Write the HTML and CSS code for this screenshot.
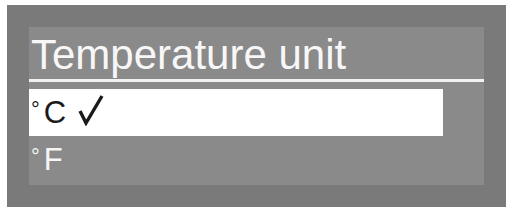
FILE: index.html
```html
<!DOCTYPE html>
<html lang="en">
<head>
    <meta charset="UTF-8">
    <title>Temperature unit</title>
    <link rel="stylesheet" href="styles.css">
</head>
<body>
    <div class="frame">
        <div class="panel">
            <div class="title">Temperature unit</div>
            <div class="rule"></div>
            <div class="option selected">
                <span class="unit"><span class="deg">°</span>C</span>
                <svg class="check" width="26" height="32" viewBox="0 0 26 32">
                    <path d="M2 17 L8 29 L24 2" fill="none" stroke="#1a1a1a" stroke-width="3.4" stroke-linejoin="miter"/>
                </svg>
            </div>
            <div class="option">
                <span class="unit"><span class="deg">°</span>F</span>
            </div>
        </div>
    </div>
</body>
</html>
```

FILE: styles.css
```css
body {
    margin: 0;
    background: #ffffff;
    font-family: "Liberation Sans", Arial, sans-serif;
}
.frame {
    margin: 5px 0 0 7px;
    width: 499px;
    height: 202px;
    box-sizing: border-box;
    padding: 22px;
    background: #7a7a7a;
}
.panel {
    height: 158px;
    background: #8a8a8a;
    display: flex;
    flex-direction: column;
}
.title {
    height: 52px;
    line-height: 56px;
    font-size: 42px;
    color: #f7f7f7;
    padding-left: 2px;
    white-space: nowrap;
}
.rule {
    height: 3px;
    background: #f2f2f2;
    margin-bottom: 7px;
}
.option {
    height: 47px;
    width: 414px;
    display: flex;
    align-items: center;
    padding-left: 2px;
    box-sizing: border-box;
    font-size: 31px;
    color: #f5f5f5;
}
.option.selected {
    background: #ffffff;
    color: #1a1a1a;
}
.unit {
    line-height: 1;
}
.deg {
    font-size: 22px;
    vertical-align: 6px;
    margin-right: 4px;
}
.check {
    margin-left: 12px;
    margin-top: -6px;
}
```
